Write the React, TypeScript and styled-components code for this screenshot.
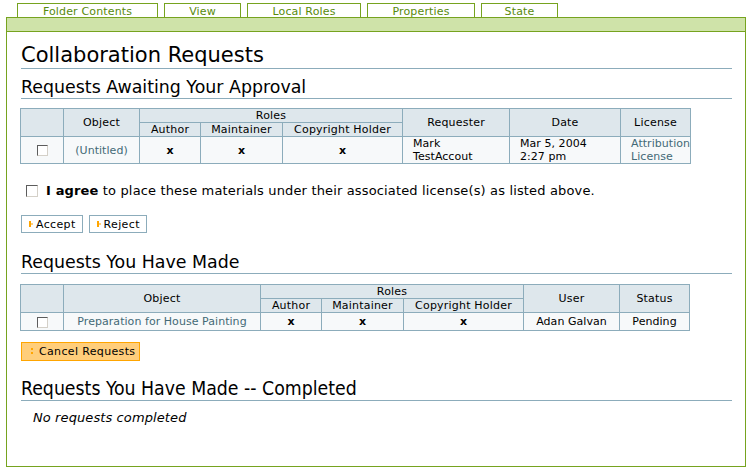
import React from "react";
import styled, { createGlobalStyle } from "styled-components";

const GlobalStyle = createGlobalStyle`
  html, body {
    margin: 0;
    padding: 0;
    background: #ffffff;
  }
  body {
    font-family: "DejaVu Sans", Verdana, sans-serif;
    font-size: 11px;
    color: #000000;
  }
`;

const Page = styled.div`
  width: 752px;
  height: 474px;
  padding-top: 3px;
  box-sizing: border-box;
  overflow: hidden;
`;

const TabRow = styled.div`
  display: flex;
  gap: 6px;
  margin-left: 17px;
  height: 14px;
`;

const Tab = styled.div<{ $w: number }>`
  width: ${(p) => p.$w}px;
  box-sizing: border-box;
  border: 1px solid #76a31f;
  border-bottom: none;
  background: #ffffff;
  color: #578a0c;
  font-size: 11px;
  line-height: 15px;
  letter-spacing: 0.15px;
  text-align: center;
`;

const Frame = styled.div`
  margin-left: 6px;
  width: 740px;
  height: 450px;
  box-sizing: border-box;
  border: 1px solid #76a31f;
`;

const Bar = styled.div`
  height: 13px;
  background: #cfe3a9;
  border-bottom: 1px solid #76a31f;
`;

const Content = styled.div`
  padding: 12px 13px 0 14px;
`;

const Title = styled.h1`
  margin: 0;
  font-size: 21px;
  font-weight: normal;
  line-height: 23px;
  padding-bottom: 1px;
  border-bottom: 1px solid #8cacbb;
`;

const Heading = styled.h2<{ $narrow?: boolean }>`
  margin: 0;
  font-size: ${(p) => (p.$narrow ? 19.3 : 17.4)}px;
  font-weight: normal;
  line-height: ${(p) => (p.$narrow ? 21 : 19)}px;
  padding-bottom: 1px;
  border-bottom: 1px solid #8cacbb;
  font-stretch: ${(p) => (p.$narrow ? "condensed" : "normal")};
`;

const Table = styled.table<{ $w: number }>`
  border-collapse: collapse;
  width: ${(p) => p.$w}px;
  margin-left: -1px;
  font-size: 11px;
  table-layout: fixed;

  th, td {
    border: 1px solid #8cacbb;
    padding: 0 4px;
    text-align: center;
    font-weight: normal;
  }
  th {
    background: #dee7ec;
    line-height: 13px;
    letter-spacing: 0.2px;
  }
  td {
    background: #f7f9fa;
    line-height: 13px;
    letter-spacing: 0.05px;
  }
`;

const Row = styled.tr<{ $h?: number }>`
  height: ${(p) => (p.$h ? `${p.$h}px` : "auto")};
`;

const LeftCell = styled.td`
  && {
    text-align: left;
    padding-left: 10px;
    padding-right: 0;
  }
`;

const Mark = styled.td`
  && {
    font-weight: bold;
  }
`;

const Link = styled.a`
  color: #436976;
  text-decoration: none;
`;

const Box = styled.span<{ $size?: number }>`
  display: inline-block;
  width: ${(p) => p.$size ?? 11}px;
  height: ${(p) => p.$size ?? 11}px;
  box-sizing: border-box;
  border: 1px solid #5c5c5c;
  border-right-color: #d4d0c8;
  border-bottom-color: #d4d0c8;
  background: #ffffff;
  vertical-align: middle;
`;

const AgreeRow = styled.div`
  display: flex;
  align-items: center;
  gap: 8px;
  margin: 19px 0 0 5px;
  font-size: 13px;
  letter-spacing: 0.15px;
`;

const Buttons = styled.div<{ $top: number }>`
  display: flex;
  gap: 6px;
  margin-top: ${(p) => p.$top}px;
`;

const Button = styled.button<{ $primary?: boolean }>`
  display: flex;
  align-items: center;
  gap: ${(p) => (p.$primary ? 6 : 3)}px;
  height: ${(p) => (p.$primary ? 19 : 18)}px;
  padding: 0 ${(p) => (p.$primary ? 4 : 6)}px 0 ${(p) => (p.$primary ? 9 : 7)}px;
  font-family: "DejaVu Sans", Verdana, sans-serif;
  font-size: 11px;
  letter-spacing: 0.35px;
  color: #000000;
  background: ${(p) => (p.$primary ? "#ffce7b" : "#ffffff")};
  border: 1px solid ${(p) => (p.$primary ? "#ffa500" : "#8cacbb")};
  cursor: pointer;
`;

const Arrow = () => (
  <svg width="4" height="6" viewBox="0 0 4 6">
    <rect x="0" y="0" width="2" height="2" fill="#ffa500" />
    <rect x="0" y="2" width="2" height="2" fill="#ffa500" />
    <rect x="2" y="2" width="2" height="2" fill="#ffcf7f" />
    <rect x="0" y="4" width="2" height="2" fill="#ffa500" />
  </svg>
);

const Dots = () => (
  <svg width="2" height="8" viewBox="0 0 2 8">
    <rect x="0" y="0" width="2" height="2" fill="#ffa500" />
    <rect x="0" y="4" width="2" height="2" fill="#ffa500" />
  </svg>
);

const Section = styled.div<{ $top: number }>`
  margin-top: ${(p) => p.$top}px;
`;

const Empty = styled.p`
  margin: 9px 0 0 12px;
  font-style: italic;
  font-size: 13px;
  letter-spacing: 0.1px;
`;

const tabs: [string, number][] = [
  ["Folder Contents", 141],
  ["View", 77],
  ["Local Roles", 114],
  ["Properties", 108],
  ["State", 77],
];

export default function App() {
  return (
    <Page>
      <GlobalStyle />
      <TabRow>
        {tabs.map(([t, w]) => (
          <Tab key={t} $w={w}>
            {t}
          </Tab>
        ))}
      </TabRow>
      <Frame>
        <Bar />
        <Content>
          <Title>Collaboration Requests</Title>
          <Section $top={9}>
            <Heading>Requests Awaiting Your Approval</Heading>
          </Section>
          <Section $top={9}>
            <Table $w={670}>
              <colgroup>
                <col style={{ width: 43 }} />
                <col style={{ width: 76 }} />
                <col style={{ width: 61 }} />
                <col style={{ width: 82 }} />
                <col style={{ width: 120 }} />
                <col style={{ width: 107 }} />
                <col style={{ width: 111 }} />
                <col style={{ width: 70 }} />
              </colgroup>
              <thead>
                <tr>
                  <th rowSpan={2}></th>
                  <th rowSpan={2}>Object</th>
                  <th colSpan={3}>Roles</th>
                  <th rowSpan={2}>Requester</th>
                  <th rowSpan={2}>Date</th>
                  <th rowSpan={2}>License</th>
                </tr>
                <tr>
                  <th>Author</th>
                  <th>Maintainer</th>
                  <th>Copyright Holder</th>
                </tr>
              </thead>
              <tbody>
                <Row>
                  <td>
                    <Box />
                  </td>
                  <td>
                    <Link href="#">(Untitled)</Link>
                  </td>
                  <Mark>x</Mark>
                  <Mark>x</Mark>
                  <Mark>x</Mark>
                  <LeftCell>
                    Mark
                    <br />
                    TestAccout
                  </LeftCell>
                  <LeftCell>
                    Mar 5, 2004
                    <br />
                    2:27 pm
                  </LeftCell>
                  <LeftCell>
                    <Link href="#">
                      Attribution
                      <br />
                      License
                    </Link>
                  </LeftCell>
                </Row>
              </tbody>
            </Table>
          </Section>
          <AgreeRow>
            <Box $size={12} />
            <span>
              <b>I agree</b> to place these materials under their associated license(s) as listed
              above.
            </span>
          </AgreeRow>
          <Buttons $top={17}>
            <Button>
              <Arrow />
              Accept
            </Button>
            <Button>
              <Arrow />
              Reject
            </Button>
          </Buttons>
          <Section $top={20}>
            <Heading>Requests You Have Made</Heading>
          </Section>
          <Section $top={10}>
            <Table $w={669}>
              <colgroup>
                <col style={{ width: 43 }} />
                <col style={{ width: 197 }} />
                <col style={{ width: 61 }} />
                <col style={{ width: 82 }} />
                <col style={{ width: 120 }} />
                <col style={{ width: 96 }} />
                <col style={{ width: 70 }} />
              </colgroup>
              <thead>
                <tr>
                  <th rowSpan={2}></th>
                  <th rowSpan={2}>Object</th>
                  <th colSpan={3}>Roles</th>
                  <th rowSpan={2}>User</th>
                  <th rowSpan={2}>Status</th>
                </tr>
                <tr>
                  <th>Author</th>
                  <th>Maintainer</th>
                  <th>Copyright Holder</th>
                </tr>
              </thead>
              <tbody>
                <Row $h={18}>
                  <td>
                    <Box />
                  </td>
                  <td>
                    <Link href="#">Preparation for House Painting</Link>
                  </td>
                  <Mark>x</Mark>
                  <Mark>x</Mark>
                  <Mark>x</Mark>
                  <td>Adan Galvan</td>
                  <td>Pending</td>
                </Row>
              </tbody>
            </Table>
          </Section>
          <Buttons $top={11}>
            <Button $primary>
              <Dots />
              Cancel Requests
            </Button>
          </Buttons>
          <Section $top={17}>
            <Heading $narrow>Requests You Have Made -- Completed</Heading>
          </Section>
          <Empty>No requests completed</Empty>
        </Content>
      </Frame>
    </Page>
  );
}
